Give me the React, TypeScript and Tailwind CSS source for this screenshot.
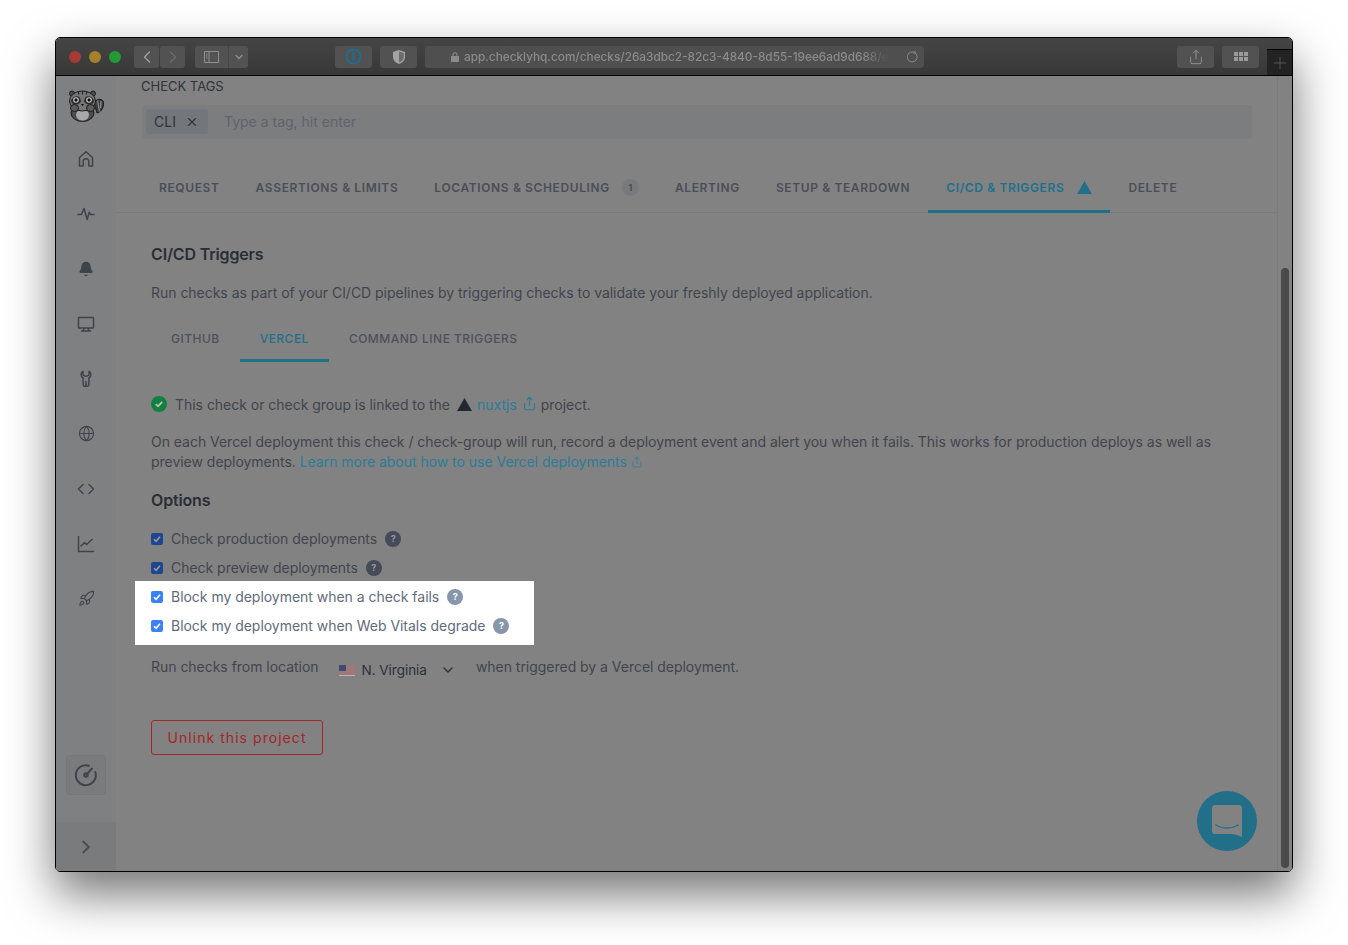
import { Bell, ChevronDown, ChevronLeft, ChevronRight, Globe, Rocket, Share, X } from 'lucide-react';

const mainTabs = [
  { label: 'REQUEST' },
  { label: 'ASSERTIONS & LIMITS' },
  { label: 'LOCATIONS & SCHEDULING', badge: '1' },
  { label: 'ALERTING' },
  { label: 'SETUP & TEARDOWN' },
  { label: 'CI/CD & TRIGGERS', active: true },
  { label: 'DELETE' },
];

function VercelMark({ className }: { className: string }) {
  return (
    <svg viewBox="0 0 16 14" className={className} fill="currentColor">
      <path d="M8 0l8 14H0z" />
    </svg>
  );
}

function Raccoon() {
  return (
    <svg viewBox="0 0 36 32" className="h-[32px] w-[36px]">
      <path d="M26 13c2-4 7-5 9-2 2 4-1 11-6 12z" fill="#3d3d3f" stroke="#1c1c1c" />
      <path d="M29.500 10.500l2 11M33 11l-.5 7" stroke="#8c8c8c" strokeWidth="1.300" />
      <ellipse cx="14.500" cy="23" rx="11.500" ry="8.500" fill="#4c4c4e" stroke="#1c1c1c" />
      <ellipse cx="14.500" cy="25" rx="6.500" ry="5.500" fill="#a8a8a8" />
      <ellipse cx="4" cy="3.500" rx="2.500" ry="2.500" fill="#4c4c4e" stroke="#1c1c1c" />
      <ellipse cx="25" cy="3.500" rx="2.500" ry="2.500" fill="#4c4c4e" stroke="#1c1c1c" />
      <ellipse cx="14.500" cy="11" rx="13" ry="10" fill="#767677" stroke="#1c1c1c" />
      <path d="M10 1.500l1 3M14.500 1v3.500M19 1.500l-1 3" stroke="#2c2c2e" strokeWidth="1.200" />
      <path d="M3 11c1-5 7-6 9-3l1 3c-1 4-9 5-10 0zM26 11c-1-5-7-6-9-3l-1 3c1 4 9 5 10 0z" fill="#2a2a2c" />
      <circle cx="8" cy="10" r="2.800" fill="#d4d4d4" />
      <circle cx="21" cy="10" r="2.800" fill="#d4d4d4" />
      <circle cx="8" cy="10" r="1.700" fill="#0e0e0e" />
      <circle cx="21" cy="10" r="1.700" fill="#0e0e0e" />
      <path d="M13 14h3l-1.500 2z" fill="#0e0e0e" />
      <ellipse cx="6.500" cy="18" rx="4" ry="3.500" fill="#5c5c5e" stroke="#1c1c1c" />
      <ellipse cx="22.500" cy="18" rx="4" ry="3.500" fill="#5c5c5e" stroke="#1c1c1c" />
    </svg>
  );
}

function NavIcon({ d }: { d: string }) {
  return (
    <svg viewBox="0 0 18 18" className="h-[18px] w-[18px]" fill="none" stroke="currentColor" strokeWidth="1.500" strokeLinecap="round" strokeLinejoin="round">
      <path d={d} />
    </svg>
  );
}

function Question({ light }: { light?: boolean }) {
  return (
    <span className={`flex h-4 w-4 items-center justify-center rounded-full text-[9px] font-bold ${light ? 'bg-[#8896ab] text-white' : 'bg-[#454b5a] text-[#9a9a9a]'}`}>
      ?
    </span>
  );
}

function OptionRow({ label, light }: { label: string; light?: boolean }) {
  return (
    <div className={`flex h-[29px] items-center ${light ? 'text-[#5f6b7c]' : 'text-[#41454e]'}`}>
      <span className={`flex h-3 w-3 items-center justify-center rounded-[2px] ${light ? 'bg-[#3b82f6]' : 'bg-[#1e4590]'}`}>
        <svg viewBox="0 0 12 12" className="h-3 w-3" fill="none" stroke={light ? '#fff' : '#9a9a9a'} strokeWidth="1.6">
          <path d="M3 6.200l2.100 2.100L9 3.800" />
        </svg>
      </span>
      <span className="ml-2 mr-2">{label}</span>
      <Question light={light} />
    </div>
  );
}

function ChromeButton({ className, children }: { className: string; children?: React.ReactNode }) {
  return <div className={`flex h-[22px] items-center justify-center rounded-[3px] bg-[#525252] text-[#8f8f8f] ${className}`}>{children}</div>;
}

function TitleBar() {
  return (
    <div className="flex h-[38px] shrink-0 items-center border-b border-black bg-gradient-to-b from-[#454545] to-[#383838] pl-[13px]">
      <div className="flex gap-2">
        <span className="h-3 w-3 rounded-full bg-[#a83a36]" />
        <span className="h-3 w-3 rounded-full bg-[#a5812a]" />
        <span className="h-3 w-3 rounded-full bg-[#239a36]" />
      </div>
      <ChromeButton className="ml-[13px] w-[25px]">
        <ChevronLeft size={20} strokeWidth={1.5} className="text-[#a0a0a0]" />
      </ChromeButton>
      <ChromeButton className="ml-px w-[25px]">
        <ChevronRight size={20} strokeWidth={1.5} className="text-[#6c6c6c]" />
      </ChromeButton>
      <div className="ml-[10px] flex h-[22px] w-[53px] rounded-[3px] bg-[#525252] text-[#8f8f8f]">
        <div className="flex w-[34px] items-center justify-center border-r border-[#444]">
          <svg viewBox="0 0 15 12" className="h-3 w-[15px]" fill="none" stroke="currentColor">
            <path d="M.5.500h14v11H.5zM5 .500v11" />
            <path d="M2 3h1.500M2 5h1.500M2 7h1.500" />
          </svg>
        </div>
        <div className="flex flex-1 items-center justify-center">
          <ChevronDown size={12} strokeWidth={2.5} />
        </div>
      </div>
      <ChromeButton className="ml-[87px] w-[37px]">
        <svg viewBox="0 0 18 18" className="h-[17px] w-[17px]" fill="none" stroke="#1f6c8f" strokeWidth="2">
          <circle cx="9" cy="9" r="7.500" />
          <path d="M9 4.500v9" strokeWidth="2.500" />
        </svg>
      </ChromeButton>
      <ChromeButton className="ml-2 w-[37px]">
        <svg viewBox="0 0 12 14" className="h-[14px] w-3">
          <path d="M6 0l6 2v5c0 3.500-3 6-6 7-3-1-6-3.500-6-7V2z" fill="#a3a3a3" />
          <path d="M6 1.500l4.700 1.500v4c0 2.800-2.300 4.800-4.700 5.600z" fill="#6b6b6b" />
        </svg>
      </ChromeButton>
      <div className="relative ml-2 flex h-[22px] w-[499px] items-center rounded-[3px] bg-[#4f4f4f] pl-[26px] text-[#8b8b8b]">
        <svg viewBox="0 0 8 10" className="mr-[5px] h-[10px] w-2" fill="currentColor">
          <path d="M1.500 4V2.800a2.500 2.500 0 015 0V4H8v6H0V4zm1 0h3V2.800a1.500 1.500 0 00-3 0z" />
        </svg>
        <span className="whitespace-nowrap text-[11.800px] font-medium leading-[22px] [mask-image:linear-gradient(to_right,#000_94%,transparent)]">
          app.checklyhq.com/checks/26a3dbc2-82c3-4840-8d55-19ee6ad9d688/e
        </span>
        <svg viewBox="0 0 12 12" className="absolute right-[5px] h-3 w-3" fill="none" stroke="currentColor">
          <path d="M7.500 1.500A5 5 0 116 1H8M6.500-1L8.500 1 6.500 3" />
        </svg>
      </div>
      <ChromeButton className="ml-[253px] w-[37px]">
        <Share size={16} strokeWidth={1.5} />
      </ChromeButton>
      <ChromeButton className="ml-2 w-[37px]">
        <div className="grid grid-cols-3 gap-px">
          {[0, 1, 2, 3, 4, 5].map(i => (
            <span key={i} className="h-1 w-1 bg-[#9a9a9a]" />
          ))}
        </div>
      </ChromeButton>
      <div className="ml-2 flex h-[26px] w-[25px] items-center justify-center self-end border-t border-black bg-[#232323] text-[#555]">
        <svg viewBox="0 0 12 12" className="h-3 w-3" stroke="currentColor">
          <path d="M6 0v12M0 6h12" />
        </svg>
      </div>
    </div>
  );
}

function Sidebar() {
  const icons = [
    <NavIcon d="M2.500 16V7.500L9 1.800l6.500 5.700V16h-3.700v-4.500a2.800 2.800 0 00-5.600 0V16z" />,
    <NavIcon d="M1 9.500h3.500L7 3.500l3.200 11L12.300 7l1 2.500H17" />,
    <Bell size={16} strokeWidth={1.75} fill="currentColor" />,
    <NavIcon d="M2 2.500h14a.5.5 0 01.5.5v9.500a.5.5 0 01-.5.5H2a.5.5 0 01-.5-.5V3a.5.5 0 01.5-.5zM7 13l-1 3M11 13l1 3M4.500 16h9" />,
    <NavIcon d="M5.500 1.500C3.500 3 3.500 6.500 6 8l.3 7a1.200 1.200 0 002.700 0M12.500 1.500c2 1.500 2 5 -.5 6.500l-.3 7a1.200 1.200 0 01-2.700 0V11.500M6 1.500v3.500c1.500 1.500 4.500 1.500 6 0V1.500" />,
    <Globe size={17} strokeWidth={1.6} />,
    <NavIcon d="M6 4.500L1.500 9 6 13.500M12 4.500L16.500 9 12 13.500" />,
    <NavIcon d="M1.500 1.500v15h15M4 11l3.500-3.500 2 2 5.500-5" />,
    <Rocket size={17} strokeWidth={1.6} />,
  ];
  return (
    <div className="flex w-[60px] shrink-0 flex-col items-center bg-[#7f8081] text-[#3f434b]">
      <div className="flex h-[55px] w-full items-center justify-center pt-1">
        <Raccoon />
      </div>
      {icons.map((icon, i) => (
        <div key={i} className="flex h-[55px] w-full items-center justify-center">
          {icon}
        </div>
      ))}
      <div className="mt-auto mb-[27px] flex h-10 w-10 items-center justify-center rounded-[3px] border border-[#767778] bg-[#7a7b7c]">
        <svg viewBox="0 0 24 24" className="h-6 w-6" fill="none" stroke="currentColor" strokeWidth="2" strokeLinecap="round">
          <path d="M15 2.700A10 10 0 1021.300 9" />
          <path d="M12.800 11.200L18 5.500" />
          <circle cx="12" cy="12" r="1.800" />
        </svg>
      </div>
      <div className="flex h-[49px] w-full items-center justify-center bg-[#7a7b7d] text-[#444b58]">
        <ChevronRight size={22} strokeWidth={2} />
      </div>
    </div>
  );
}

export default function App() {
  return (
    <div className="h-[945px] w-[1348px] overflow-hidden bg-white pl-[55px] pt-[37px] font-['Inter',sans-serif] text-[14px]">
      <div className="flex h-[835px] w-[1238px] flex-col overflow-hidden rounded-[5px] border border-black shadow-[0_22px_48px_rgba(0,0,0,0.55)]">
        <TitleBar />
        <div className="relative flex min-h-0 flex-1 bg-[#828282]">
          <Sidebar />
          <div className="min-w-0 flex-1 pr-[25px]">
            <div className="pl-[25px] text-[13px] leading-5 text-[#2f333b]">CHECK TAGS</div>
            <div className="ml-[26px] mr-[15px] mt-[9px] flex h-[34px] w-[1110px] items-center rounded-[3px] bg-[#7b7d7f] pb-px pl-[4px] text-[#5f636b]">
              <span className="flex h-[25px] w-[62px] items-center rounded-[3px] bg-[#73777c] pl-2 text-[#2f333b]">
                CLI
                <X size={14} strokeWidth={2} className="ml-[9px]" />
              </span>
              <span className="ml-[16px]">Type a tag, hit enter</span>
            </div>

            <div className="-mr-[25px] mt-[24px] flex h-[50px] border-b border-[#7a7a7a] pl-[25px] text-[12px] font-semibold tracking-[0.052em] text-[#4a4e58]">
              {mainTabs.map(tab => (
                <div
                  key={tab.label}
                  className={`-mb-px flex items-center border-b-[3px] px-[18px] pt-[2px] ${tab.active ? 'border-[#20708a] text-[#20708a]' : 'border-transparent'}`}
                >
                  {tab.label}
                  {tab.badge && (
                    <span className="ml-3 flex h-[17px] w-[17px] items-center justify-center rounded-full bg-[#77797c] pt-px text-[9px] font-bold tracking-normal">
                      {tab.badge}
                    </span>
                  )}
                  {tab.active && <VercelMark className="ml-[13px] h-[13px] w-[15px]" />}
                </div>
              ))}
            </div>

            <div className="pl-[35px] tracking-[-0.002em] text-[#41454e]">
              <h2 className="mt-[31px] text-[16px] font-semibold leading-5 tracking-[-0.01em] text-[#2a2e36]">CI/CD Triggers</h2>
              <p className="mt-[19px] leading-5">
                Run checks as part of your CI/CD pipelines by triggering checks to validate your freshly deployed application.
              </p>

              <div className="mt-[23px] flex h-[36px] text-[12px] font-medium tracking-[0.04em] text-[#4d515a]">
                <div className="px-5 pt-[4px]">GITHUB</div>
                <div className="border-b-[3px] border-[#20708a] px-5 pt-[4px] text-[#20708a]">VERCEL</div>
                <div className="px-5 pt-[4px]">COMMAND LINE TRIGGERS</div>
              </div>

              <div className="mt-[32px] flex h-5 items-center">
                <span className="flex h-4 w-4 items-center justify-center rounded-full bg-[#10813f]">
                  <svg viewBox="0 0 12 12" className="h-3 w-3" fill="none" stroke="#bcbcbc" strokeWidth="1.800">
                    <path d="M2.800 6.200l2.200 2.100 4.200-4.300" />
                  </svg>
                </span>
                <span className="ml-2">This check or check group is linked to the</span>
                <VercelMark className="ml-[7px] h-[13px] w-[15px] text-[#232730]" />
                <span className="ml-[5px] text-[#2a7d99]">nuxtjs</span>
                <Share size={15} strokeWidth={1.75} className="ml-[5px] mb-[2px] text-[#2a7d99]" />
                <span className="ml-[4px]">project.</span>
              </div>

              <p className="mt-[18px] w-[1080px] leading-[20px]">
                On each Vercel deployment this check / check-group will run, record a deployment event and alert you when it fails. This works for production deploys as well as preview deployments.{' '}
                <span className="text-[#2a7d99]">
                  Learn more about how to use Vercel deployments
                  <Share size={12} strokeWidth={1.75} className="ml-[4px] mb-[3px] inline" />
                </span>
              </p>

              <h3 className="mt-[18px] text-[16px] font-semibold leading-5 tracking-[-0.01em] text-[#2a2e36]">Options</h3>

              <div className="mt-[14px]">
                <OptionRow label="Check production deployments" />
                <OptionRow label="Check preview deployments" />
                <div className="-ml-4 -mt-px w-[399px] bg-white pb-[5px] pl-4 pt-px">
                  <OptionRow label="Block my deployment when a check fails" light />
                  <OptionRow label="Block my deployment when Web Vitals degrade" light />
                </div>
              </div>

              <div className="mt-[10px] flex h-[28px]">
                <span className="pt-[2px] leading-5">Run checks from location</span>
                <span className="ml-5 flex h-[28px] items-center pt-[2px] text-[#2c3038]">
                  <svg viewBox="0 0 16 11" className="h-[11px] w-4">
                    <rect width="16" height="11" fill="#b4b4b4" />
                    <path d="M0 1h16M0 3h16M0 5h16M0 7h16M0 9h16" stroke="#8e3d40" strokeWidth="1.100" />
                    <rect width="7" height="6" fill="#3f4a75" />
                  </svg>
                  <span className="ml-[7px] text-[13.500px]">N. Virginia</span>
                  <ChevronDown size={16} strokeWidth={2} className="ml-[13px]" />
                </span>
                <span className="ml-5 pt-[2px] leading-5">when triggered by a Vercel deployment.</span>
              </div>

              <button
                type="button"
                className="mt-[37px] h-[35px] w-[172px] rounded-[3px] border border-[#a52626] tracking-[0.075em] text-[#a52626]"
              >
                Unlink this project
              </button>
            </div>
          </div>

          <div className="w-[15px] shrink-0 border-l border-[#7b7b7b] bg-[#828282]" />
          <div className="absolute bottom-[3px] right-[3px] top-[192px] w-2 rounded-full bg-[#4a4a4a]" />
          <div className="absolute bottom-5 right-[35px] flex h-[60px] w-[60px] items-center justify-center rounded-full bg-[#226f8a]">
            <svg viewBox="0 0 30 32" className="h-[32px] w-[30px]">
              <path d="M3 0h24a3 3 0 013 3v29c-5-2.500-9-3-14-3H3a3 3 0 01-3-3V3a3 3 0 013-3z" fill="#828282" />
              <path d="M4 20c6 4 16 4 22 0" stroke="#226f8a" strokeWidth="1.500" fill="none" strokeLinecap="round" />
            </svg>
          </div>
        </div>
      </div>
    </div>
  );
}
